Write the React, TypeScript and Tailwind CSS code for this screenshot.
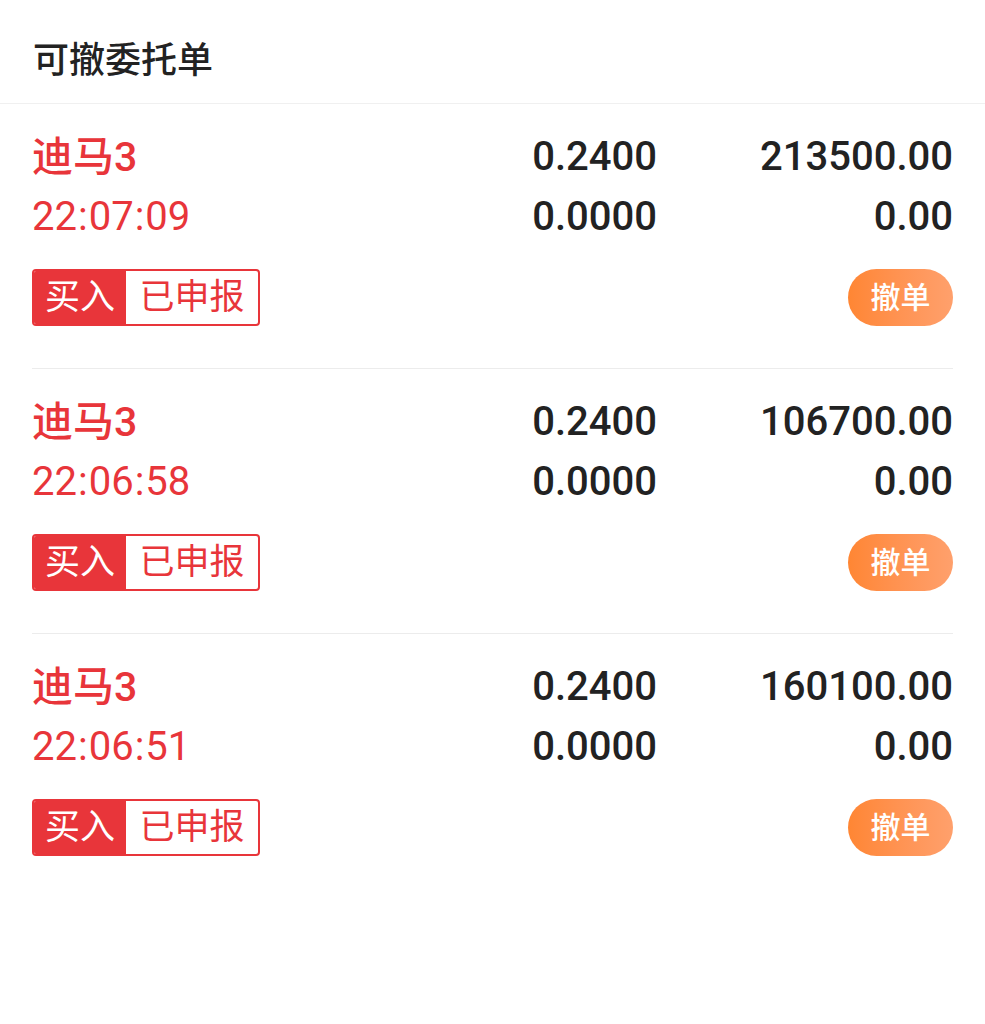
const orders = [
  { name: "迪马3", time: "22:07:09", price: "0.2400", dealPrice: "0.0000", qty: "213500.00", dealQty: "0.00" },
  { name: "迪马3", time: "22:06:58", price: "0.2400", dealPrice: "0.0000", qty: "106700.00", dealQty: "0.00" },
  { name: "迪马3", time: "22:06:51", price: "0.2400", dealPrice: "0.0000", qty: "160100.00", dealQty: "0.00" },
];

const font = "font-['Roboto','Noto_Sans_CJK_SC',sans-serif]";

// colons in the reference time stamps sit a little wider apart
function Time({ value }: { value: string }) {
  const parts = value.split(":");
  return (
    <>
      {parts.map((p, i) => (
        <span key={i}>
          {i > 0 && <span className="mx-[1px]">:</span>}
          {p}
        </span>
      ))}
    </>
  );
}

export default function App() {
  return (
    <div className={`min-h-screen w-[985px] bg-white ${font}`}>
      <div className="flex h-[104px] items-center border-b border-[#f0f0f0] px-[33px] pt-[19px]">
        <h1 className="text-[36px] font-medium leading-none text-[#222]">可撤委托单</h1>
      </div>
      <div className="px-[32px]">
        {orders.map((o, i) => (
          <div
            key={i}
            className={`pt-[23px] pb-[42px] ${i < orders.length - 1 ? "border-b border-[#ececec]" : ""}`}
          >
            <div className="grid grid-cols-[1fr_auto_296px] text-[40px] leading-[60px]">
              <div className="text-[41px] font-medium text-[#e8353a]">{o.name}</div>
              <div className="font-medium text-[#222]">{o.price}</div>
              <div className="text-right font-medium text-[#222]">{o.qty}</div>
              <div className="text-[#e8353a]">
                <Time value={o.time} />
              </div>
              <div className="font-medium text-[#222]">{o.dealPrice}</div>
              <div className="text-right font-medium text-[#222]">{o.dealQty}</div>
            </div>
            <div className="mt-[22px] flex items-center justify-between">
              <div className="flex h-[57px] overflow-hidden rounded-[4px] border-2 border-[#e8353a] text-[35px] leading-none">
                <span className="flex w-[92px] items-center justify-center bg-[#e8353a] text-white">买入</span>
                <span className="flex w-[132px] items-center justify-center text-[#e8353a]">已申报</span>
              </div>
              <button className="flex h-[57px] w-[105px] items-center justify-center rounded-full bg-gradient-to-r from-[#ff8633] to-[#ffa06c] text-[30px] font-medium leading-none text-white">
                撤单
              </button>
            </div>
          </div>
        ))}
      </div>
    </div>
  );
}
